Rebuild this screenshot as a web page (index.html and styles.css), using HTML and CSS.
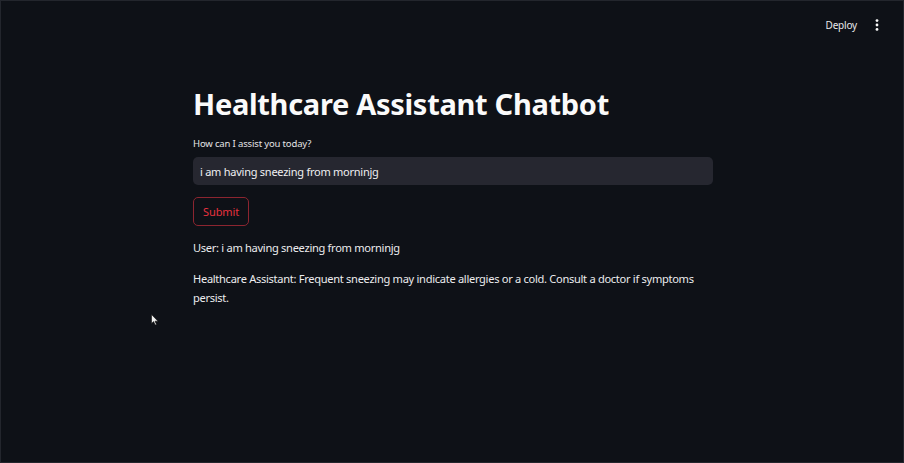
FILE: index.html
```html
<!DOCTYPE html>
<html>
<head>
<meta charset="utf-8">
<link rel="stylesheet" href="styles.css">
</head>
<body>
<div class="app">
  <header class="topbar">
    <span class="deploy">Deploy</span>
    <svg class="kebab" width="4" height="12" viewBox="0 0 4 12"><circle cx="2" cy="1.6" r="1.4" fill="#fafafa"/><circle cx="2" cy="6" r="1.4" fill="#fafafa"/><circle cx="2" cy="10.4" r="1.4" fill="#fafafa"/></svg>
  </header>
  <main class="content">
    <h1 class="title">Healthcare Assistant Chatbot</h1>
    <div class="field">
      <label class="label">How can I assist you today?</label>
      <div class="input">i am having sneezing from morninjg</div>
    </div>
    <button class="submit">Submit</button>
    <p class="msg">User: i am having sneezing from morninjg</p>
    <p class="msg">Healthcare Assistant: Frequent sneezing may indicate allergies or a cold. Consult a doctor if symptoms persist.</p>
  </main>
  <svg class="cursor" width="8" height="12" viewBox="0 0 8 12"><path d="M0.5 0.5 L0.5 9.5 L2.6 7.6 L4.2 11 L5.5 10.4 L4 7.2 L7 7.2 Z" fill="#f0f0f0" stroke="#111" stroke-width="0.6"/></svg>
</div>
</body>
</html>
```

FILE: styles.css
```css
html, body {
  margin: 0;
  padding: 0;
  background: #0e1117;
}
.app {
  position: relative;
  width: 904px;
  height: 463px;
  box-sizing: border-box;
  border: 1px solid #23262d;
  font-family: "Noto Sans", "Open Sans", sans-serif;
  color: #fafafa;
  overflow: hidden;
}
.topbar {
  display: flex;
  justify-content: flex-end;
  align-items: center;
  gap: 18px;
  height: 48px;
  padding-right: 24px;
}
.deploy {
  font-size: 10px;
  letter-spacing: -0.2px;
  color: #e8e8ea;
}
.kebab { display: block; }
.content {
  width: 520px;
  margin-left: 192px;
  display: flex;
  flex-direction: column;
  align-items: flex-start;
  padding-top: 36px;
}
.title {
  margin: 0;
  font-size: 29px;
  font-weight: 700;
  line-height: 38px;
  letter-spacing: -0.3px;
  color: #fafafa;
}
.field {
  width: 100%;
  margin-top: 14px;
  display: flex;
  flex-direction: column;
  gap: 6px;
}
.label {
  font-size: 9.5px;
  line-height: 14px;
  letter-spacing: -0.15px;
  color: #e4e4e6;
}
.input {
  height: 28px;
  box-sizing: border-box;
  background: #262730;
  border-radius: 5px;
  padding: 0 7px;
  display: flex;
  align-items: center;
  font-size: 11px;
  letter-spacing: -0.25px;
  color: #f0f0f2;
}
.submit {
  margin-top: 12px;
  height: 29px;
  padding: 0 9px;
  background: transparent;
  border: 1px solid #8c2530;
  border-radius: 5px;
  color: #e8323f;
  font-family: inherit;
  font-size: 11px;
  letter-spacing: -0.1px;
}
.msg {
  max-width: 515px;
  margin: 12px 0 0;
  font-size: 11.1px;
  line-height: 19px;
  letter-spacing: -0.3px;
  color: #ececee;
}
.msg + .msg { margin-top: 12px; }
.cursor {
  position: absolute;
  left: 150px;
  top: 313px;
}
```
